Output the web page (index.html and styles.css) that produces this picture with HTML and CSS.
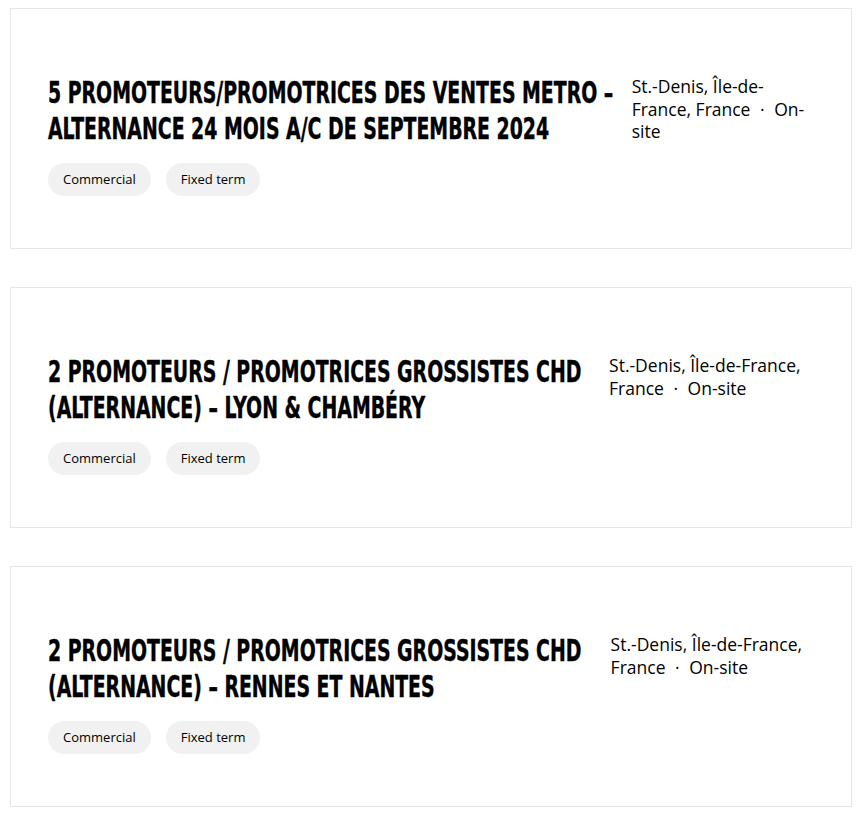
FILE: index.html
```html
<!DOCTYPE html>
<html lang="fr">
<head>
<meta charset="utf-8">
<title>Offres</title>
<link rel="stylesheet" href="styles.css">
</head>
<body>
<main class="list">
  <article class="card">
    <div class="card-main">
      <h2 class="title">5 PROMOTEURS/PROMOTRICES DES VENTES METRO – ALTERNANCE 24 MOIS A/C DE SEPTEMBRE 2024</h2>
      <p class="location">St.-Denis, Île-de-France, France <span class="sep">·</span> On-site</p>
    </div>
    <ul class="tags">
      <li class="tag">Commercial</li>
      <li class="tag">Fixed term</li>
    </ul>
  </article>
  <article class="card">
    <div class="card-main">
      <h2 class="title">2 PROMOTEURS / PROMOTRICES GROSSISTES CHD (ALTERNANCE) – LYON &amp; CHAMBÉRY</h2>
      <p class="location">St.-Denis, Île-de-France, France <span class="sep">·</span> On-site</p>
    </div>
    <ul class="tags">
      <li class="tag">Commercial</li>
      <li class="tag">Fixed term</li>
    </ul>
  </article>
  <article class="card">
    <div class="card-main">
      <h2 class="title">2 PROMOTEURS / PROMOTRICES GROSSISTES CHD (ALTERNANCE) – RENNES ET NANTES</h2>
      <p class="location">St.-Denis, Île-de-France, France <span class="sep">·</span> On-site</p>
    </div>
    <ul class="tags">
      <li class="tag">Commercial</li>
      <li class="tag">Fixed term</li>
    </ul>
  </article>
</main>
</body>
</html>
```
FILE: styles.css
```css
html, body {
  background: #ffffff;
}
body {
  margin: 8px 5px 8px 10px;
  color: #000;
  font-family: "Open Sans", "Noto Sans", sans-serif;
}
.list {
  display: flex;
  flex-direction: column;
  gap: 38px;
}
.card {
  border: 1px solid #e6e6e6;
  padding: 67px 38px 52px 37px;
  display: flex;
  flex-direction: column;
  gap: 15px;
}
.card-main {
  display: flex;
  align-items: flex-start;
}
/* condensed display face approximated with a vertically stretched condensed bold */
.title {
  margin: 0 0 20.7px 0;
  font-family: "DejaVu Sans Condensed", "DejaVu Sans", sans-serif;
  font-weight: 700;
  font-size: 21px;
  line-height: 25.64px;
  color: #000;
  -webkit-text-stroke: 0.3px #000;
  transform: scaleY(1.404);
  transform-origin: top left;
}
.location {
  margin: -1px 0 0 0;
  font-size: 17.5px;
  line-height: 22.7px;
  color: #000;
}
.sep {
  margin: 0 5px;
}
.tags {
  list-style: none;
  margin: 0;
  padding: 0;
  display: flex;
  gap: 15px;
}
.tag {
  background: #f1f1f1;
  border-radius: 17px;
  padding: 8px 15px;
  font-size: 13px;
  line-height: 17px;
  color: #000;
}
```
